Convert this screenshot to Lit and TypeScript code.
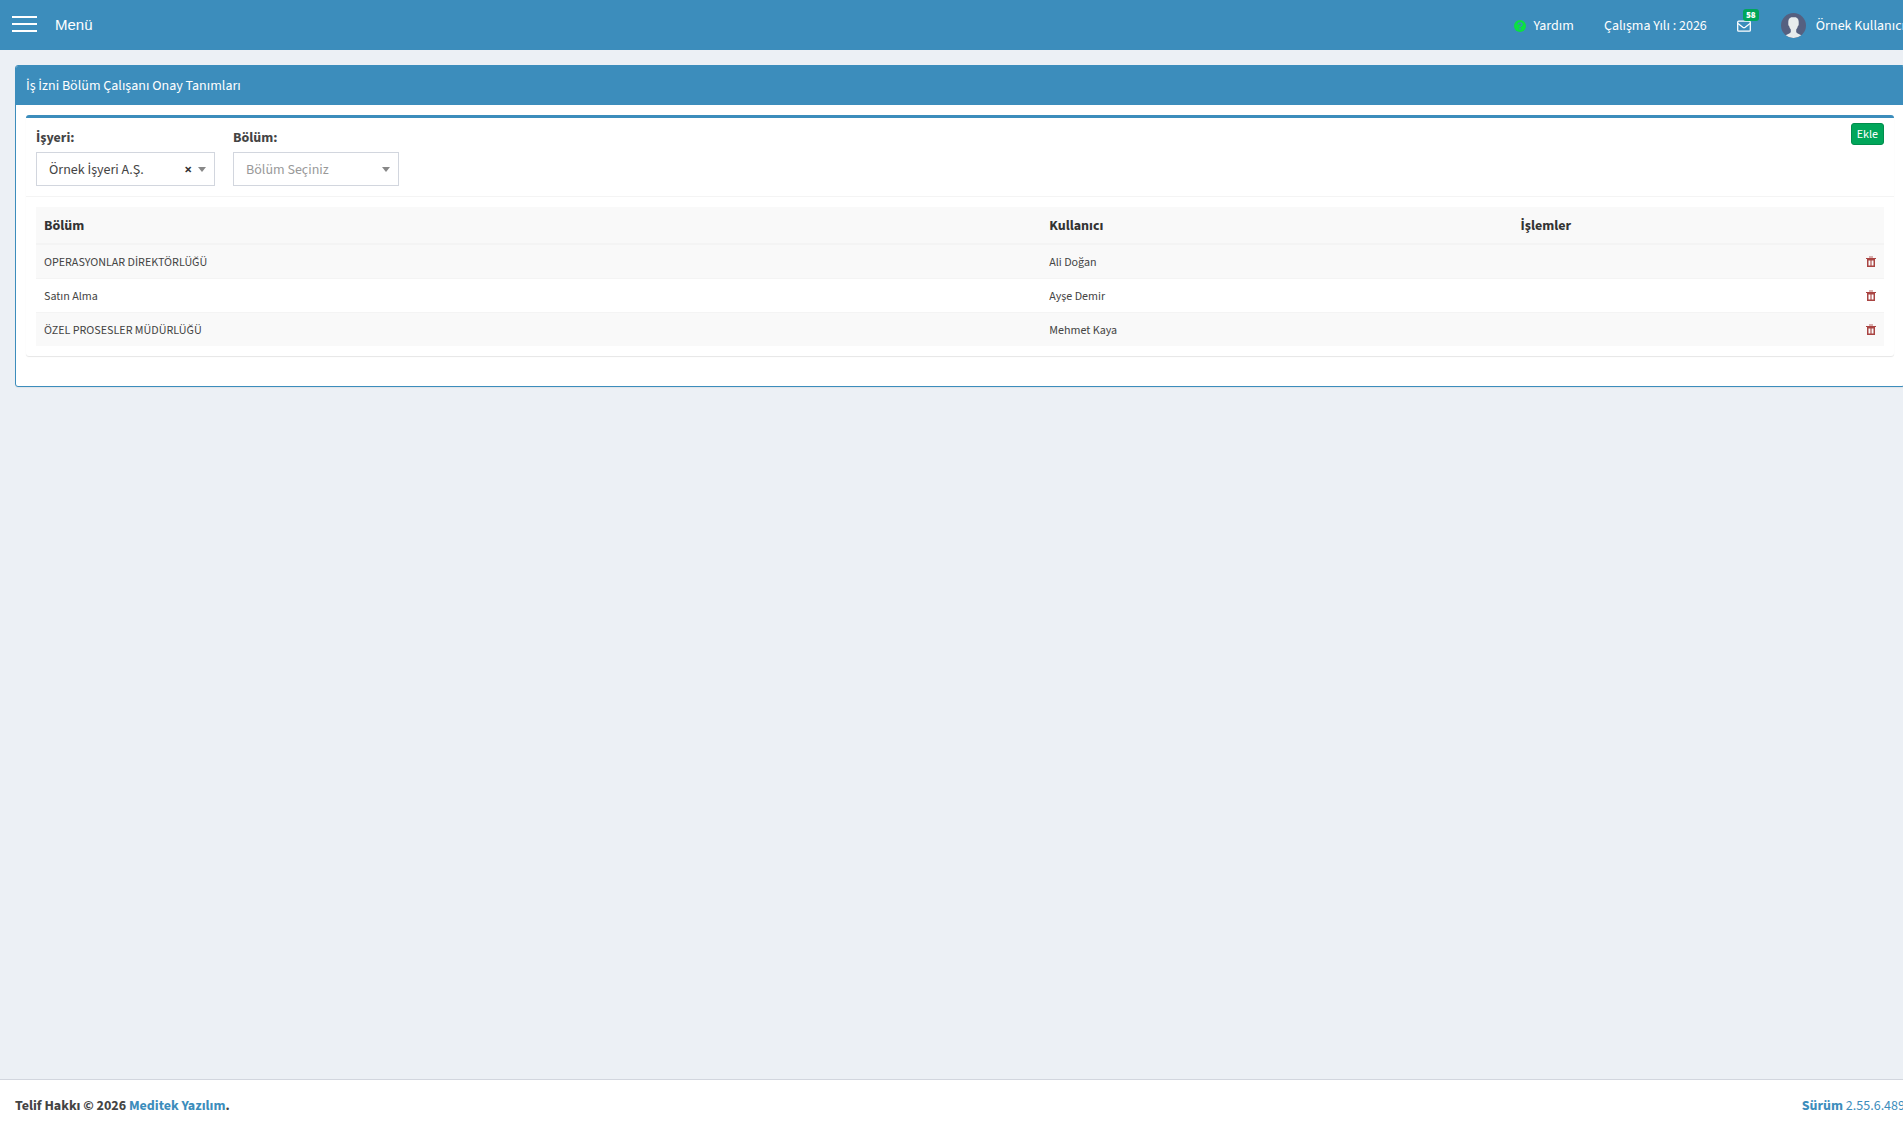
import { LitElement, html, css, svg } from "lit";
import { customElement, state } from "lit/decorators.js";

interface Approval {
  department: string;
  user: string;
}

const trashIcon = svg`
  <rect x="3" y="0" width="4" height="2" opacity=".4"></rect>
  <rect x="0" y="2" width="10" height="1"></rect>
  <path fill-rule="evenodd" d="M1 3h8v8H1zM2.5 4.5v5h5v-5z"></path>
  <rect x="4" y="4" width="2" height="6" opacity=".55"></rect>
`;

@customElement("app-root")
export class AppRoot extends LitElement {
  @state() private rows: Approval[] = [
    { department: "OPERASYONLAR DİREKTÖRLÜĞÜ", user: "Ali Doğan" },
    { department: "Satın Alma", user: "Ayşe Demir" },
    { department: "ÖZEL PROSESLER MÜDÜRLÜĞÜ", user: "Mehmet Kaya" },
  ];

  static styles = css`
    :host {
      display: block;
      overflow: hidden;
      background: #ecf0f5;
      color: #333;
      font-family: "Source Sans 3", "Source Sans Pro", "Open Sans", sans-serif;
      font-size: 14px;
      line-height: 20px;
    }
    *,
    *::before {
      box-sizing: border-box;
    }
    button,
    select {
      font: inherit;
      margin: 0;
      cursor: pointer;
    }
    a {
      color: #3c8dbc;
      text-decoration: none;
    }
    /* The layout runs one scrollbar width past the window. */
    .page {
      display: flex;
      flex-direction: column;
      width: calc(100% + 17px);
      min-height: 100vh;
    }
    .topbar {
      display: flex;
      justify-content: space-between;
      align-items: center;
      height: 50px;
      background: #3c8dbc;
      color: #fff;
    }
    .menu {
      display: flex;
      align-items: center;
      gap: 18px;
      padding: 0 12px;
      border: 0;
      background: none;
      color: #fff;
      font-family: "Liberation Sans", Arial, sans-serif;
      font-size: 15px;
      line-height: 20px;
    }
    .bars {
      display: grid;
      gap: 5px;
      width: 25px;
      padding-bottom: 2px;
    }
    .bars i {
      height: 2px;
      background: #fff;
    }
    .nav {
      display: flex;
      align-items: center;
    }
    .nav a {
      display: flex;
      align-items: center;
      height: 50px;
      padding: 1px 15px 0;
      color: #fff;
    }
    .help {
      gap: 8px;
    }
    .mail {
      position: relative;
    }
    .count {
      position: absolute;
      top: 9px;
      right: 7px;
      width: 16px;
      height: 12px;
      border-radius: 3px;
      background: #00a65a;
      font-size: 9px;
      font-weight: 900;
      line-height: 13px;
      text-align: center;
    }
    .user {
      gap: 10px;
    }
    svg {
      display: block;
      flex: none;
    }
    main {
      flex: 1;
      padding: 15px;
    }
    .panel {
      border: 1px solid #3c8dbc;
      border-radius: 3px;
      background: #fff;
      box-shadow: 0 1px 1px rgba(0, 0, 0, 0.05);
    }
    .title {
      margin: 0;
      padding: 10px 10px 9px;
      border-radius: 2px 2px 0 0;
      background: #3c8dbc;
      color: #fff;
      font-size: 14px;
      font-weight: 400;
      line-height: 20px;
    }
    .content {
      padding: 10px 10px 30px;
    }
    .box {
      border-top: 3px solid #3c8dbc;
      border-radius: 3px;
      box-shadow: 0 1px 1px rgba(0, 0, 0, 0.1);
    }
    .toolbar {
      display: flex;
      justify-content: space-between;
      align-items: flex-start;
      padding: 5px 10px 10px;
      border-bottom: 1px solid #f4f4f4;
    }
    .filters {
      display: flex;
      gap: 18px;
      padding-top: 5px;
    }
    .filter {
      display: grid;
      gap: 4px;
    }
    .filter label {
      color: #444;
      font-weight: 700;
    }
    .picker {
      position: relative;
    }
    .picker::after {
      content: "";
      position: absolute;
      top: 15px;
      right: 9px;
      border: 4px solid transparent;
      border-top: 5px solid #888;
      border-bottom: 0;
      pointer-events: none;
    }
    .picker select {
      appearance: none;
      display: block;
      width: 179px;
      height: 34px;
      padding: 2px 30px 0 12px;
      border: 1px solid #d2d6de;
      border-radius: 0;
      background: #fff;
      color: #444;
    }
    .picker .empty {
      width: 166px;
      color: #999;
    }
    .clear {
      position: absolute;
      top: 8px;
      right: 21px;
      padding: 0 2px;
      border: 0;
      background: none;
      color: #333;
      font-weight: 700;
    }
    .add {
      padding: 2px 5px 0;
      border: 1px solid #008d4c;
      border-radius: 3px;
      background: #00a65a;
      color: #fff;
      font-size: 12px;
      line-height: 18px;
    }
    .list {
      padding: 10px;
    }
    table {
      width: 100%;
      border-collapse: separate;
      border-spacing: 0;
      table-layout: fixed;
    }
    .col-department {
      width: 54.4%;
    }
    .col-user {
      width: 25.5%;
    }
    th {
      padding: 9px 8px 7px;
      border-bottom: 1px solid #f4f4f4;
      background: #f9f9f9;
      text-align: left;
    }
    td {
      padding: 9px 8px 7px;
      border-top: 1px solid #f4f4f4;
      color: #444;
      font-size: 12px;
      line-height: 17px;
    }
    td.actions {
      padding: 8px;
    }
    tr:nth-child(odd) td {
      background: #f9f9f9;
    }
    .remove {
      display: block;
      margin-left: auto;
      padding: 0;
      border: 0;
      background: none;
      color: #a94442;
    }
    footer {
      display: flex;
      justify-content: space-between;
      padding: 16px 15px 14px;
      border-top: 1px solid #d2d6de;
      background: #fff;
      color: #444;
    }
  `;

  private remove(row: Approval) {
    this.rows = this.rows.filter((r) => r !== row);
  }

  render() {
    return html`
      <div class="page">
        <header class="topbar">
          <button class="menu" type="button">
            <span class="bars"><i></i><i></i><i></i></span>Menü
          </button>
          <nav class="nav">
            <a class="help" href="#yardim">
              <svg width="12" height="12" viewBox="0 0 12 12" fill="none">
                <circle cx="6" cy="6" r="6" fill="#0be041"></circle>
                <path d="M4 4.6C4.200 2.400 8 2.400 8 4.500C8 5.800 6 5.700 6 7.300" stroke="#3c8dbc" stroke-width="1.400"></path>
                <rect x="5.300" y="8.200" width="1.500" height="1.500" fill="#3c8dbc"></rect>
              </svg>
              Yardım
            </a>
            <a href="#yil">Çalışma Yılı : 2026</a>
            <a class="mail" href="#mesajlar" aria-label="Mesajlar">
              <svg width="14" height="12" viewBox="0 0 14 12" fill="none" stroke="#fff">
                <rect x=".7" y="1.200" width="12.600" height="10" rx="1" stroke-width="1.300"></rect>
                <path d="M1 3.500L5.800 7.200Q7 8 8.200 7.200L13 3.500" stroke-width="1.300"></path>
              </svg>
              <span class="count">58</span>
            </a>
            <a class="user" href="#profil">
              <svg width="25" height="25" viewBox="0 0 25 25">
                <circle cx="12.500" cy="12.500" r="12.500" fill="#556080"></circle>
                <path fill="#e7eced" d="M12.500 4C9 4 7.200 5.800 7.300 9v2.200c0 1 .3 1.500.8 1.900.3 1.500.9 2.700 1.700 3.500v2.300c-.4 1.300-3.300 2.100-5.100 3.400A12.400 12.400 0 0 0 12.500 25a12.400 12.400 0 0 0 7.800-2.700c-1.800-1.300-4.700-2.100-5.100-3.400v-2.300c.8-.8 1.400-2 1.700-3.500.5-.4.8-.9.8-1.900V9c.1-3.200-1.700-5-5.200-5z"></path>
              </svg>
              Örnek Kullanıcı
            </a>
          </nav>
        </header>

        <main>
          <section class="panel">
            <h1 class="title">İş İzni Bölüm Çalışanı Onay Tanımları</h1>
            <div class="content">
              <div class="box">
                <div class="toolbar">
                  <div class="filters">
                    <div class="filter">
                      <label for="workplace">İşyeri:</label>
                      <div class="picker">
                        <select id="workplace">
                          <option>Örnek İşyeri A.Ş.</option>
                        </select>
                        <button class="clear" type="button">×</button>
                      </div>
                    </div>
                    <div class="filter">
                      <label for="department">Bölüm:</label>
                      <div class="picker">
                        <select id="department" class="empty">
                          <option>Bölüm Seçiniz</option>
                        </select>
                      </div>
                    </div>
                  </div>
                  <button class="add" type="button">Ekle</button>
                </div>
                <div class="list">
                  <table>
                    <thead>
                      <tr>
                        <th class="col-department">Bölüm</th>
                        <th class="col-user">Kullanıcı</th>
                        <th>İşlemler</th>
                      </tr>
                    </thead>
                    <tbody>
                      ${this.rows.map(
                        (row) => html`
                          <tr>
                            <td>${row.department}</td>
                            <td>${row.user}</td>
                            <td class="actions">
                              <button class="remove" type="button" aria-label="Sil" @click=${() => this.remove(row)}>
                                <svg width="10" height="11" viewBox="0 0 10 11" fill="currentColor">${trashIcon}</svg>
                              </button>
                            </td>
                          </tr>
                        `,
                      )}
                    </tbody>
                  </table>
                </div>
              </div>
            </div>
          </section>
        </main>

        <footer>
          <strong>Telif Hakkı © 2026 <a href="#meditek">Meditek Yazılım</a>.</strong>
          <a href="#surum"><b>Sürüm</b> 2.55.6.489</a>
        </footer>
      </div>
    `;
  }
}
